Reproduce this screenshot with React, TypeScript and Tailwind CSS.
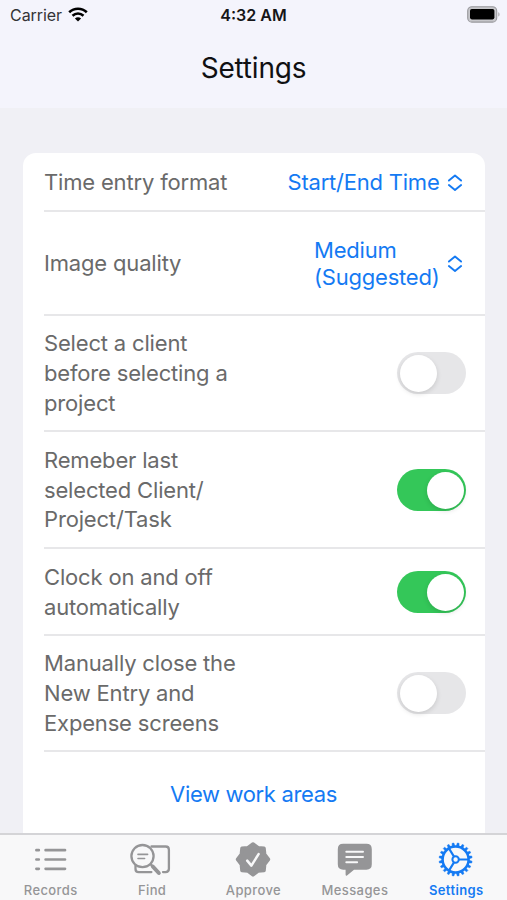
import type { ReactNode } from "react";
import clsx from "clsx";

function WifiIcon() {
  return (
    <svg width="20" height="15" viewBox="0 0 20 15" fill="none" stroke="#000" strokeWidth="2.6">
      <path d="M1.2 5.3C6.2 0.5 13.8 0.5 18.8 5.3" />
      <path d="M4.5 8.7C7.7 5.8 12.3 5.8 15.5 8.7" />
      <path d="M10 14.6 6.9 11.5C8.7 9.9 11.3 9.9 13.1 11.5Z" fill="#000" stroke="none" />
    </svg>
  );
}

function BatteryIcon() {
  return (
    <svg width="34" height="17" viewBox="0 0 34 17" fill="none">
      <rect x="0.7" y="0.7" width="29" height="15.4" rx="4.2" fill="#c6c6ca" stroke="#98989c" strokeWidth="1.1" />
      <rect x="3" y="3" width="24.4" height="10.4" rx="1.8" fill="#000" />
      <path d="M31.3 6.2c1.6.5 1.6 3.9 0 4.4Z" fill="#a5a5a9" />
    </svg>
  );
}

function SelectorIcon() {
  return (
    <svg
      width="16"
      height="18"
      viewBox="0 0 16 18"
      fill="none"
      stroke="currentColor"
      strokeWidth="1.9"
      strokeLinecap="round"
      strokeLinejoin="round"
    >
      <path d="M1.9 6.6 8 1.6 14.1 6.6" />
      <path d="M1.9 11.1 8 16.1 14.1 11.1" />
    </svg>
  );
}

function RecordsIcon() {
  return (
    <svg width="42" height="38" viewBox="0 0 42 38" stroke="currentColor" strokeWidth="2.7" strokeLinecap="round">
      <path d="M6.4 10.2h2.4M6.4 19.5h2.4M6.4 28.8h2.4M15.6 10.2h19.4M15.6 19.5h19.4M15.6 28.8h19.4" />
    </svg>
  );
}

function FindIcon() {
  return (
    <svg
      className="overflow-visible"
      width="42"
      height="38"
      viewBox="0 0 42 38"
      fill="none"
      stroke="currentColor"
      strokeWidth="2.3"
      strokeLinecap="round"
    >
      <path d="M20.5 6.5H34.6q3.3 0 3.3 3.3v19q0 3.3-3.3 3.3h-2.6M4.5 25.5v3.4q0 3.2 3.2 3.2h12.7" />
      <circle cx="11.5" cy="16.1" r="11.1" />
      <path d="M7 14.4h9.6M7 18.5h6.6" strokeWidth="1.6" />
      <path d="M19.7 24.4 21.6 26.3" />
      <path d="M21.8 26.5 27.8 33" strokeWidth="4" />
    </svg>
  );
}

function ApproveIcon() {
  return (
    <svg width="42" height="38" viewBox="0 0 42 38" fill="none">
      <path
        d="M21 3.9 26 7.7 32.1 8.3 32.7 14.4 36.5 19.4 32.7 24.4 32.1 30.5 26 31.1 21 34.9 16 31.1 9.9 30.5 9.3 24.4 5.5 19.4 9.3 14.4 9.9 8.3 16 7.7Z"
        fill="currentColor"
        stroke="currentColor"
        strokeWidth="3.4"
        strokeLinejoin="round"
      />
      <path
        d="M15.2 20.6 19.4 25.6 26.6 14.1"
        stroke="#f8f8f9"
        strokeWidth="2.5"
        strokeLinecap="round"
        strokeLinejoin="round"
      />
    </svg>
  );
}

function MessagesIcon() {
  return (
    <svg width="42" height="38" viewBox="0 0 42 38" fill="none">
      <path
        d="M9.2 3.8H32.4q5.4 0 5.4 5.4V24.3q0 5.4-5.4 5.4H20l-7 5.7q-1.4.8-1.4-.8v-4.9H9.2Q3.8 29.7 3.8 24.3V9.2q0-5.4 5.4-5.4Z"
        fill="currentColor"
      />
      <path d="M12.3 11.8h16.7M12.3 17h16.7M12.3 22.2h10.8" stroke="#f8f8f9" strokeWidth="2" strokeLinecap="round" />
    </svg>
  );
}

function GearIcon() {
  const teeth = Array.from({ length: 20 }, (_, i) => i * 18 + 9);

  return (
    <svg width="42" height="38" viewBox="0 0 42 38" fill="none" stroke="currentColor">
      {teeth.map((angle) => (
        <path
          key={angle}
          d="M19.3 6 19.7 3H21.5L21.9 6Z"
          fill="currentColor"
          strokeWidth="0.5"
          transform={`rotate(${angle} 20.6 19.5)`}
        />
      ))}
      <circle cx="20.6" cy="19.5" r="13" strokeWidth="2.5" />
      <circle cx="20.6" cy="19.5" r="3.2" strokeWidth="2" />
      <path d="M23.9 19.5H33.6M19 16.6 13.8 8.1M19 22.4 13.8 30.9" strokeWidth="2.1" />
    </svg>
  );
}

function Row({ label, className, children }: { label: string; className: string; children: ReactNode }) {
  return (
    <div className={clsx("flex items-center justify-between border-b-2 border-[#e7e7e9] ml-[21px]", className)}>
      <span className="w-[200px] pt-[2px] pl-[0.5px] whitespace-pre-line leading-[29.8px] tracking-[-0.17px] text-[#6a6a6a]">
        {label}
      </span>
      {children}
    </div>
  );
}

function Picker({ value }: { value: string }) {
  return (
    <button className="flex items-center gap-[7px] pt-[2px] mr-[22px] text-left whitespace-pre-line leading-[27px] tracking-[-0.22px] text-[#147af3]">
      {value}
      <SelectorIcon />
    </button>
  );
}

function Toggle({ on }: { on: boolean }) {
  return (
    <button
      role="switch"
      aria-checked={on}
      className={clsx(
        "flex w-[69px] h-[42px] mr-[18.5px] p-[2.5px] rounded-full",
        on ? "justify-end mt-[1px] bg-[#34c759]" : "justify-start bg-[#e6e6e8]"
      )}
    >
      <span className="size-[37px] rounded-full bg-white shadow-[0_2px_5px_rgba(0,0,0,0.13)]" />
    </button>
  );
}

const tabs = [
  { label: "Records", icon: <RecordsIcon /> },
  { label: "Find", icon: <FindIcon /> },
  { label: "Approve", icon: <ApproveIcon /> },
  { label: "Messages", icon: <MessagesIcon /> },
  { label: "Settings", icon: <GearIcon />, active: true },
];

export default function App() {
  return (
    <div className="flex flex-col w-[507px] h-[900px] overflow-hidden bg-[#f0f0f5] font-['Inter','Liberation_Sans',sans-serif]">
      <header className="h-[108px] shrink-0 bg-[#f4f4fc]">
        <div className="grid grid-cols-3 items-center h-[29px] pl-[10px] pr-[6px]">
          <div className="flex items-center gap-[6px] text-[16px] tracking-[-0.05px] text-[#333336]">
            Carrier
            <WifiIcon />
          </div>
          <div className="-ml-[4px] text-center text-[16px] font-semibold text-[#161618]">4:32 AM</div>
          <div className="flex justify-end">
            <BatteryIcon />
          </div>
        </div>
        <h1 className="pt-[20px] text-center text-[28px] leading-[38px] tracking-[-0.2px] text-[#101012]">Settings</h1>
      </header>

      <main className="flex-1 min-h-0 overflow-hidden pt-[45px] px-[22.5px]">
        <div className="h-[720px] rounded-t-[13px] bg-white text-[22px]">
          <Row label="Time entry format" className="h-[59px]">
            <Picker value="Start/End Time" />
          </Row>
          <Row label="Image quality" className="h-[104px]">
            <Picker value={"Medium\n(Suggested)"} />
          </Row>
          <Row label={"Select a client\nbefore selecting a\nproject"} className="h-[116px]">
            <Toggle on={false} />
          </Row>
          <Row label={"Remeber last\nselected Client/\nProject/Task"} className="h-[117px]">
            <Toggle on />
          </Row>
          <Row label={"Clock on and off\nautomatically"} className="h-[87px]">
            <Toggle on />
          </Row>
          <Row label={"Manually close the\nNew Entry and\nExpense screens"} className="h-[116px]">
            <Toggle on={false} />
          </Row>
          <button className="block w-full h-[84px] text-center tracking-[-0.35px] text-[#147af3]">View work areas</button>
        </div>
      </main>

      <nav className="grid grid-cols-5 h-[67px] shrink-0 border-t-2 border-[#d4d4d7] bg-[#f8f8f9]">
        {tabs.map((tab) => (
          <button
            key={tab.label}
            className={clsx("flex flex-col items-center pt-[5px]", tab.active ? "text-[#147af3]" : "text-[#959597]")}
          >
            {tab.icon}
            <span
              className={clsx(
                "mt-[3px] text-[13px] leading-[18px] tracking-[0.4px]",
                tab.active ? "font-semibold" : "font-medium"
              )}
            >
              {tab.label}
            </span>
          </button>
        ))}
      </nav>
    </div>
  );
}
